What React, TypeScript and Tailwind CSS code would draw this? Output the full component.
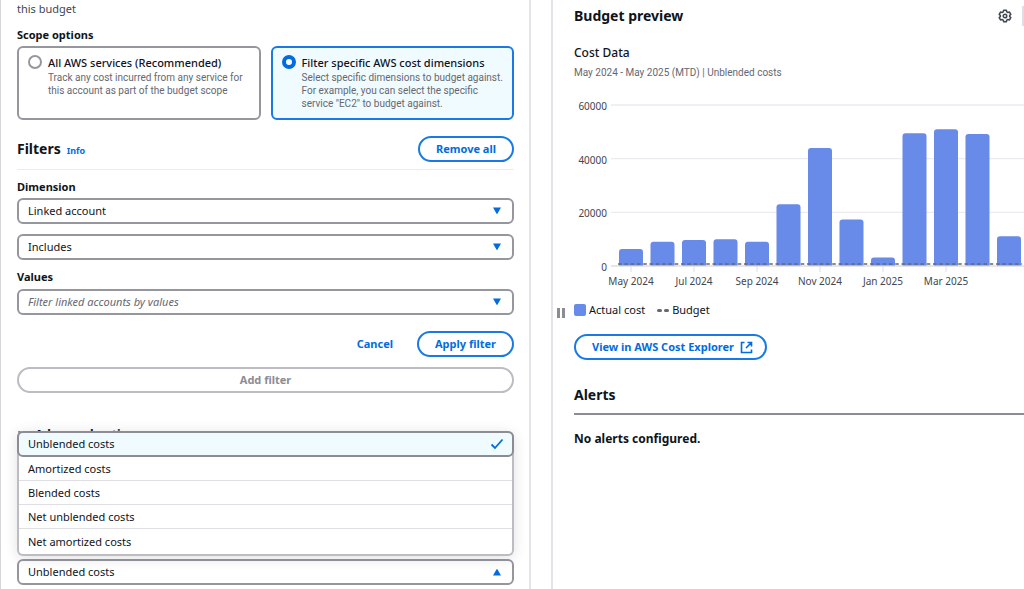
import { useState } from "react";
import type { ReactNode } from "react";

const costs = [
  { month: "May 2024", amount: 6300 },
  { month: "Jun 2024", amount: 9000 },
  { month: "Jul 2024", amount: 9700 },
  { month: "Aug 2024", amount: 10000 },
  { month: "Sep 2024", amount: 9000 },
  { month: "Oct 2024", amount: 23000 },
  { month: "Nov 2024", amount: 44000 },
  { month: "Dec 2024", amount: 17300 },
  { month: "Jan 2025", amount: 3200 },
  { month: "Feb 2025", amount: 49500 },
  { month: "Mar 2025", amount: 51000 },
  { month: "Apr 2025", amount: 49200 },
  { month: "May 2025", amount: 11100 },
];

const aggregations = [
  "Unblended costs",
  "Amortized costs",
  "Blended costs",
  "Net unblended costs",
  "Net amortized costs",
];

function Caret({ up = false }: { up?: boolean }) {
  return (
    <svg viewBox="0 0 10 8" className="w-[10px] h-[8px] fill-current" aria-hidden="true">
      <path d={up ? "M1 7.5h8L5.4 1.2a.5.5 0 0 0-.8 0z" : "M1 .5h8L5.4 6.8a.5.5 0 0 1-.8 0z"} />
    </svg>
  );
}

function Select({ id, label, options, placeholder = false }: { id: string; label: string; options: string[]; placeholder?: boolean }) {
  return (
    <div className="relative">
      <select
        id={id}
        aria-label={label}
        className={`block w-full h-[26px] appearance-none rounded-md border-2 border-[#96969e] bg-white pl-[9px] pr-8 text-[11px] ${placeholder ? "italic text-[#656871]" : "text-[#0f141a]"}`}
      >
        {options.map((o) => (
          <option key={o}>{o}</option>
        ))}
      </select>
      <span className="absolute right-[12px] inset-y-0 flex items-center pointer-events-none text-[#006ce0]">
        <Caret />
      </span>
    </div>
  );
}

function ScopeCard({ title, checked, onSelect, children }: { title: string; checked: boolean; onSelect: () => void; children: ReactNode }) {
  return (
    <label
      className={`flex flex-1 gap-[6px] min-h-[74px] rounded-md border-2 pl-[9px] pr-2 pt-[6px] ${checked ? "border-[#1a7ae4] bg-[#f0fbff]" : "border-[#96969e] bg-white"}`}
    >
      <input
        type="radio"
        name="scope"
        checked={checked}
        onChange={onSelect}
        className="mt-px size-[14px] shrink-0 appearance-none rounded-full border-2 border-[#96969e] bg-white checked:border-4 checked:border-[#006ce0]"
      />
      <span>
        <span className="block text-[11px] leading-[17px] font-medium text-[#0f141a]">{title}</span>
        <span className="block font-[Roboto,sans-serif] text-[10px] leading-[13px] text-[#656871]">{children}</span>
      </span>
    </label>
  );
}

function CostChart() {
  const y = (v: number) => 176 - (v / 60000) * 161;
  return (
    <svg viewBox="0 0 450 202" className="block w-full h-auto" role="img" aria-label="Cost data by month">
      {[60000, 40000, 20000, 0].map((v) => (
        <g key={v}>
          <line x1="37" x2="450" y1={y(v)} y2={y(v)} stroke={v ? "#ebebf0" : "#dedee3"} strokeWidth="1.3" />
          <text x="33" y={y(v) + 5} textAnchor="end" className="text-[10px] fill-[#424650]">{v}</text>
        </g>
      ))}
      {costs.map((c, i) => {
        const x = 45 + i * 31.5;
        const top = y(c.amount);
        return (
          <g key={c.month}>
            <path d={`M${x} 175.5V${top + 3}q0-3 3-3h18q3 0 3 3V175.5z`} fill="#688ae8" />
            {i % 2 === 0 && i < 12 && (
              <>
                <line x1={x + 12} x2={x + 12} y1="176" y2="182" stroke="#dedee3" />
                <text x={x + 12} y="195" textAnchor="middle" className="text-[10px] fill-[#424650]">{c.month}</text>
              </>
            )}
          </g>
        );
      })}
      <line x1="44" x2="448" y1="174" y2="174" stroke="#656871" strokeWidth="1.6" strokeDasharray="3.6 2.7" />
    </svg>
  );
}

export default function App() {
  const [scope, setScope] = useState("filter");
  const [open, setOpen] = useState(true);
  const [aggregation, setAggregation] = useState(aggregations[0]);

  return (
    <div className="grid grid-cols-[531fr_493fr] min-h-screen overflow-hidden bg-white font-['Noto_Sans',sans-serif] text-[11px] leading-[18px] text-[#0f141a]">
      <main className="border-l border-r-2 border-[#d5d5da] border-r-[#e3e3e8] pl-4 pr-[15px]">
        <p className="text-[#424650]">this budget</p>

        <fieldset className="mt-2">
          <legend className="font-bold">Scope options</legend>
          <div className="flex gap-[10px] mt-[2px]">
            <ScopeCard title="All AWS services (Recommended)" checked={scope === "all"} onSelect={() => setScope("all")}>
              Track any cost incurred from any service for this account as part of the budget scope
            </ScopeCard>
            <ScopeCard title="Filter specific AWS cost dimensions" checked={scope === "filter"} onSelect={() => setScope("filter")}>
              Select specific dimensions to budget against. For example, you can select the specific service "EC2" to budget against.
            </ScopeCard>
          </div>
        </fieldset>

        <div className="flex items-center justify-between mt-4 pb-[7px] border-b border-[#ebebf0]">
          <div className="flex items-baseline gap-[6px]">
            <h2 className="text-[14px] leading-5 font-bold">Filters</h2>
            <a href="#info" className="text-[9px] font-bold text-[#006ce0]">Info</a>
          </div>
          <button className="h-[26px] px-4 rounded-full border-2 border-[#1a7ae4] font-bold text-[#006ce0]">Remove all</button>
        </div>

        <label htmlFor="dimension" className="block mt-2 mb-[2px] font-bold">Dimension</label>
        <Select id="dimension" label="Dimension" options={["Linked account", "Service", "Region"]} />
        <div className="mt-[10px]">
          <Select id="operator" label="Operator" options={["Includes", "Excludes"]} />
        </div>
        <label htmlFor="values" className="block mt-2 mb-[3px] font-bold">Values</label>
        <Select id="values" label="Values" options={["Filter linked accounts by values"]} placeholder />

        <div className="flex justify-end gap-2 mt-4">
          <button className="h-[26px] px-4 font-bold text-[#006ce0]">Cancel</button>
          <button className="h-[26px] px-4 rounded-full border-2 border-[#1a7ae4] font-bold text-[#006ce0]">Apply filter</button>
        </div>
        <button disabled className="block w-full h-[26px] mt-[10px] rounded-full border-2 border-[#bcbcc2] font-bold text-[#8c8c94]">
          Add filter
        </button>

        <h2 className="flex items-center gap-2 mt-8 text-[12px] leading-5 font-bold">
          <Caret />
          Advanced options
        </h2>
        <div className="relative mt-[114px]">
          <button
            aria-haspopup="listbox"
            aria-expanded={open}
            onClick={() => setOpen(!open)}
            className="flex items-center justify-between w-full h-[26px] pl-[9px] pr-[10px] rounded-md border-2 border-[#96969e]"
          >
            {aggregation}
            <span className="text-[#006ce0]">
              <Caret up={open} />
            </span>
          </button>
          {open && (
            <ul role="listbox" aria-label="Aggregate costs by" className="absolute inset-x-0 bottom-[29px] rounded-md border-2 border-t-0 border-[#bcbcc2] bg-white shadow-[0_2px_14px_rgba(0,7,22,0.12)]">
              {aggregations.map((a) => (
                <li
                  key={a}
                  role="option"
                  aria-selected={a === aggregation}
                  onClick={() => setAggregation(a)}
                  className={`flex items-center justify-between ${a === aggregation ? "h-[26px] -mx-[2px] rounded-md border-2 border-[#8c8c94] bg-[#f0fbff] pl-[9px] pr-[8px]" : "h-6 px-[9px] border-b border-[#dedee3] last:h-[25px] last:border-0"}`}
                >
                  {a}
                  {a === aggregation && (
                    <svg viewBox="0 0 14 12" className="w-[14px] h-[12px]" fill="none" stroke="#006ce0" strokeWidth="1.8" aria-hidden="true">
                      <path d="M1.5 6.5l3.500 3.500L12.500 1.500" />
                    </svg>
                  )}
                </li>
              ))}
            </ul>
          )}
        </div>
      </main>

      <aside className="ml-5 flex border-l-2 border-[#e3e3e8]">
        <div className="flex w-[21px] shrink-0 items-center gap-[2px] pt-9 pl-[4px]">
          <span className="w-[3px] h-[10px] bg-[#8c8c94]" />
          <span className="w-[3px] h-[10px] bg-[#8c8c94]" />
        </div>
        <div className="min-w-0 flex-1">
          <header className="flex items-center justify-between mt-[6px]">
            <h2 className="text-[14px] leading-5 font-bold">Budget preview</h2>
            <div className="flex items-center gap-[10px]">
              <button aria-label="Preferences">
                <svg viewBox="0 0 16 16" className="size-[14px]" fill="none" stroke="#424650" strokeWidth="1.8" strokeLinejoin="round">
                  <path d="M6.500 1.500h3l.5 1.800 1.300.7 1.800-.500 1.500 2.600L13.300 7.400v1.200l1.300 1.300-1.500 2.600-1.800-.500-1.300.7-.5 1.800h-3L6 12.700l-1.300-.7-1.800.5-1.500-2.600 1.300-1.300V7.400L1.400 6.100l1.500-2.600 1.800.5L6 3.300z" />
                  <circle cx="8" cy="8" r="2" />
                </svg>
              </button>
              <span className="w-[2px] h-5 bg-[#dedee3]" />
            </div>
          </header>

          <h3 className="mt-[18px] text-[12px] font-medium">Cost Data</h3>
          <p className="mt-[2px] font-[Roboto,sans-serif] text-[10px] text-[#656871]">May 2024 - May 2025 (MTD) | Unblended costs</p>
          <div className="mt-2">
            <CostChart />
          </div>

          <div className="flex items-center gap-3 mt-[9px]">
            <span className="flex items-center gap-[3px]">
              <span className="size-[12px] rounded-xs bg-[#688ae8]" />
              Actual cost
            </span>
            <span className="flex items-center gap-[3px]">
              <span className="flex gap-[2px]">
                <span className="w-[5px] h-[3px] rounded-full bg-[#656871]" />
                <span className="w-[5px] h-[3px] rounded-full bg-[#656871]" />
              </span>
              Budget
            </span>
          </div>

          <a href="#cost-explorer" className="inline-flex items-center gap-[6px] h-[26px] mt-[15px] pl-4 pr-3 rounded-full border-2 border-[#1a7ae4] font-bold text-[#006ce0]">
            View in AWS Cost Explorer
            <svg viewBox="0 0 13 13" className="size-[13px]" fill="none" stroke="#006ce0" strokeWidth="1.6" aria-hidden="true">
              <path d="M4.500 1.500h-3v10h10v-3M7.500 1.500h4v4M11.500 1.500L6 7" />
            </svg>
          </a>

          <h2 className="mt-[25px] pb-[8px] border-b-2 border-[#8c8c94] text-[14px] leading-5 font-bold">Alerts</h2>
          <p className="mt-[15px] text-[12px] font-bold">No alerts configured.</p>
        </div>
      </aside>
    </div>
  );
}
